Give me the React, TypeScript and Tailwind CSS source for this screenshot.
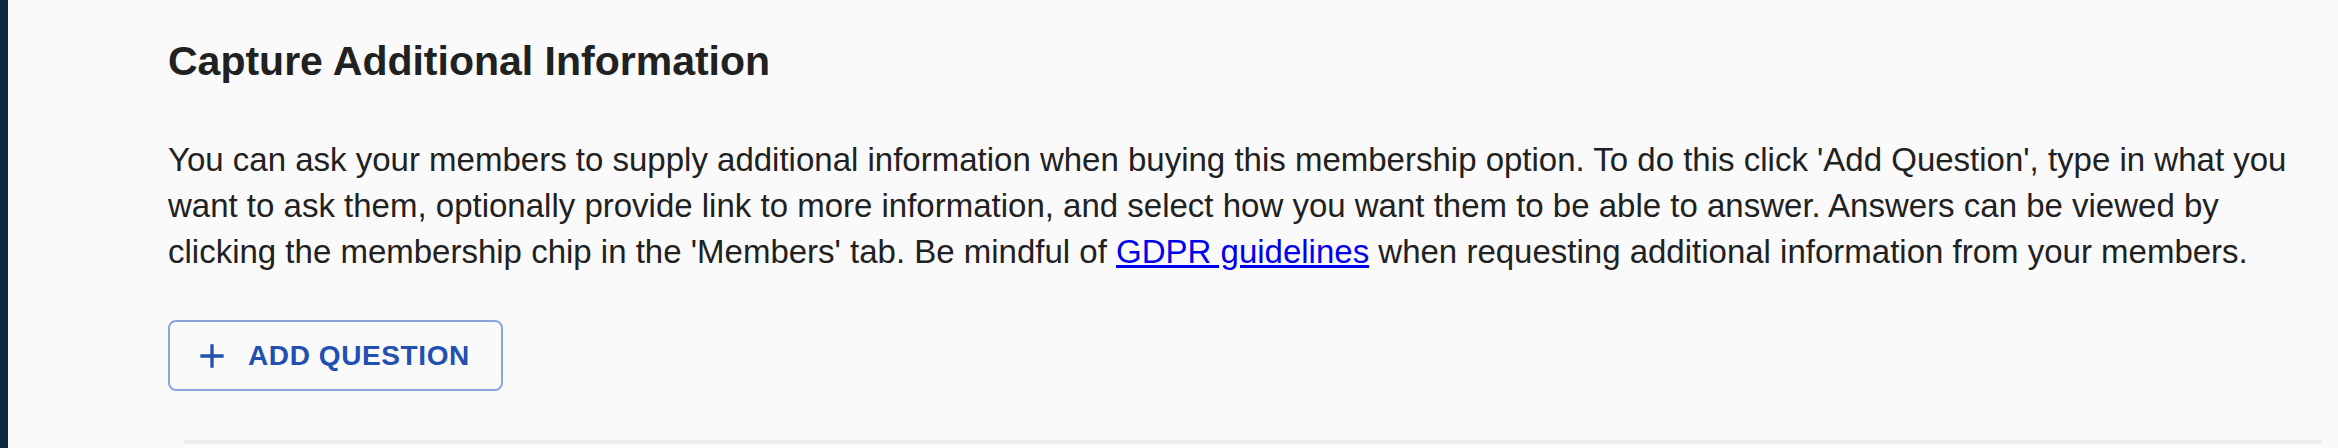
export default function App() {
  return (
    <div className="flex h-[448px] w-[2338px] overflow-hidden bg-[#fafafa] font-['Liberation_Sans',Arial,sans-serif] text-[#212121]">
      <div className="w-[8px] shrink-0 bg-[#0f2a3e]" />
      <div className="flex min-w-0 flex-1 flex-col pl-[160px] pt-[37px]">
        <div className="pr-[24px]">
          <h2 className="text-[41px] font-bold leading-[48px]">
            Capture Additional Information
          </h2>
          <p className="mt-[52px] text-[33px] leading-[46px]">
            You can ask your members to supply additional information when
            buying this membership option. To do this click 'Add Question', type
            in what you want to ask them, optionally provide link to more
            information, and select how you want them to be able to answer.
            Answers can be viewed by clicking the membership chip in the
            'Members' tab. Be mindful of{" "}
            <a href="#" className="text-[#0000ee] underline">
              GDPR guidelines
            </a>{" "}
            when requesting additional information from your members.
          </p>
        </div>
        <div className="mt-[45px] flex">
          <button
            type="button"
            className="flex h-[71px] items-center rounded-[8px] border-2 border-[#8ca5d8] pl-[22px] pr-[31px] text-[28px] font-bold tracking-[0.6px] text-[#2150b0]"
          >
            <span className="mr-[16px] flex size-[40px] items-center justify-center">
              <svg viewBox="0 0 24 24" className="size-[40px]" fill="currentColor">
                <path d="M19 13h-6v6h-2v-6H5v-2h6V5h2v6h6v2z" />
              </svg>
            </span>
            ADD QUESTION
          </button>
        </div>
        <div className="mx-[16px] mt-[49px] h-[4px] bg-[#ececec]" />
      </div>
    </div>
  );
}
